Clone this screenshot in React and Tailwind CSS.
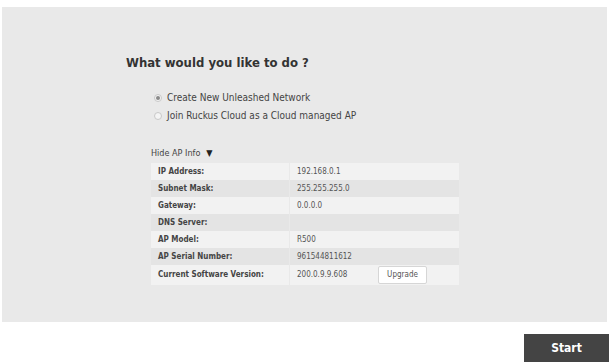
const rows = [
  ["IP Address:", "192.168.0.1"],
  ["Subnet Mask:", "255.255.255.0"],
  ["Gateway:", "0.0.0.0"],
  ["DNS Server:", ""],
  ["AP Model:", "R500"],
  ["AP Serial Number:", "961544811612"],
];

function Radio({ checked }) {
  return (
    <span className="w-[8px] h-[8px] rounded-full border border-[#c8c8c8] bg-[#f4f4f4] flex items-center justify-center">
      {checked && <span className="w-[4px] h-[4px] rounded-full bg-[#8a8a8a]" />}
    </span>
  );
}

export default function App() {
  return (
    <div className="w-[614px] h-[364px] bg-white text-[#333] pt-[7px] pl-[2px]" style={{ fontFamily: '"DejaVu Sans Condensed", "DejaVu Sans", sans-serif' }}>
      <div className="w-[605px] h-[315px] bg-[#e9e9e9] pt-[47px] pl-[124px]">
        <h1 className="text-[13px] font-bold text-[#333] leading-[18px]">What would you like to do ?</h1>

        <div className="mt-[19px] ml-[28px] flex flex-col gap-[5px] text-[10px] text-[#444]">
          <label className="flex items-center gap-[5px] h-[13px]">
            <Radio checked />
            Create New Unleashed Network
          </label>
          <label className="flex items-center gap-[5px] h-[13px]">
            <Radio />
            Join Ruckus Cloud as a Cloud managed AP
          </label>
        </div>

        <div className="mt-[25px] ml-[25px] text-[9px] text-[#444] flex items-center gap-[6px] h-[13px]">
          Hide AP Info <span className="text-[9px] text-[#222]">▼</span>
        </div>

        <div className="mt-[3px] ml-[25px] w-[308px] text-[8px]">
          {rows.map(([k, v], i) => (
            <div key={k} className={`flex h-[17px] items-center ${i % 2 ? "bg-[#e4e4e4]" : "bg-[#f2f2f2]"}`}>
              <div className="w-[139px] pl-[7px] font-bold text-[#444] border-r border-[#e9e9e9] h-full flex items-center">{k}</div>
              <div className="pl-[7px] text-[#555]">{v}</div>
            </div>
          ))}
          <div className="flex h-[20px] items-center bg-[#f2f2f2]">
            <div className="w-[139px] pl-[7px] font-bold text-[#444] border-r border-[#e9e9e9] h-full flex items-center">Current Software Version:</div>
            <div className="pl-[7px] text-[#555] w-[88px]">200.0.9.9.608</div>
            <button className="w-[49px] h-[18px] bg-white border border-[#d6d6d6] rounded-[2px] text-[8px] text-[#555]">Upgrade</button>
          </div>
        </div>
      </div>

      <div className="flex justify-end pr-[5px] mt-[12px]">
        <button className="w-[85px] h-[28px] bg-[#444] text-white font-bold text-[12px]">Start</button>
      </div>
    </div>
  );
}
